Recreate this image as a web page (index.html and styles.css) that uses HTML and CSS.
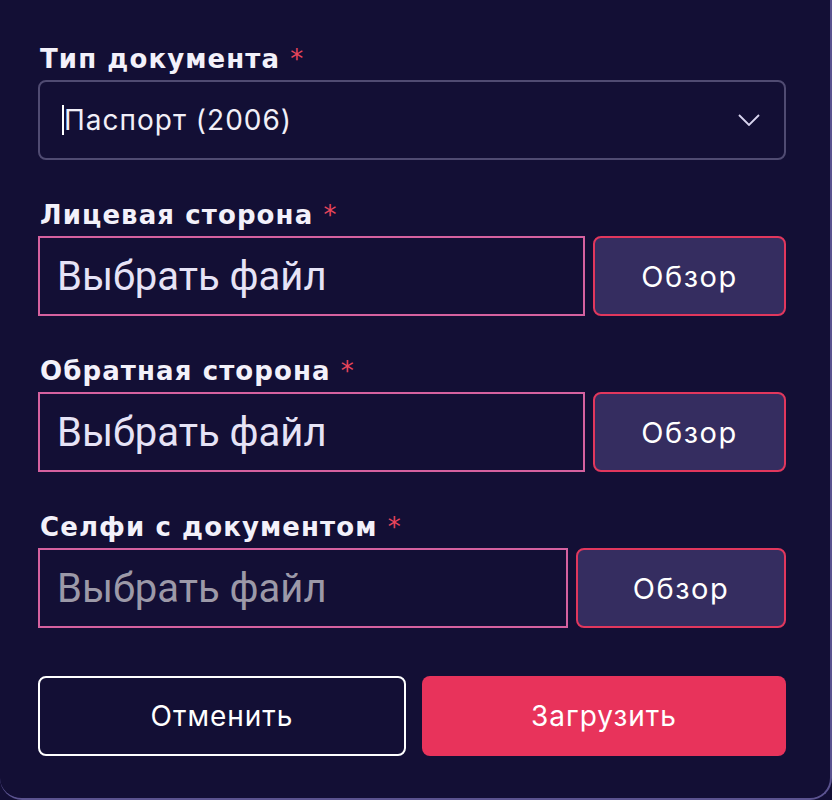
FILE: index.html
```html
<!DOCTYPE html>
<html lang="ru">
<head>
  <meta charset="UTF-8" />
  <meta name="viewport" content="width=device-width, initial-scale=1" />
  <title>Верификация документа</title>
  <link rel="stylesheet" href="styles.css">
</head>
<body>
  <div class="panel">
    <form class="doc-form">

      <div class="group">
        <label class="label">Тип документа <span class="req">*</span></label>
        <div class="select">
          <span class="caret"></span>
          <span class="select-value">Паспорт (2006)</span>
          <svg class="chevron" width="22" height="12" viewBox="0 0 22 12">
            <path d="M1 1 L11 11 L21 1" fill="none" stroke="#d9d5ef" stroke-width="1.8" />
          </svg>
        </div>
      </div>

      <div class="group">
        <label class="label">Лицевая сторона <span class="req">*</span></label>
        <div class="file-row">
          <div class="file-input">Выбрать файл</div>
          <button type="button" class="browse-btn">Обзор</button>
        </div>
      </div>

      <div class="group">
        <label class="label">Обратная сторона <span class="req">*</span></label>
        <div class="file-row">
          <div class="file-input">Выбрать файл</div>
          <button type="button" class="browse-btn">Обзор</button>
        </div>
      </div>

      <div class="group">
        <label class="label">Селфи с документом <span class="req">*</span></label>
        <div class="file-row">
          <div class="file-input empty">Выбрать файл</div>
          <button type="button" class="browse-btn wide">Обзор</button>
        </div>
      </div>

      <div class="actions">
        <button type="button" class="btn btn-cancel">Отменить</button>
        <button type="button" class="btn btn-submit">Загрузить</button>
      </div>

    </form>
  </div>
</body>
</html>
```

FILE: styles.css
```css
* {
  box-sizing: border-box;
}

body {
  margin: 0;
  background: #130f35;
  font-family: 'Inter', 'Noto Sans', sans-serif;
  color: #fff;
}

.panel {
  width: 832px;
  height: 800px;
  background: #130f35;
  border-right: 2px solid #5b5390;
  border-bottom: 2px solid #5b5390;
  border-radius: 0 0 22px 22px;
  padding: 44px 44px 0 38px;
}

.group {
  margin-bottom: 40px;
}

.label {
  display: block;
  height: 30px;
  font-family: 'DejaVu Sans', sans-serif;
  font-size: 26px;
  line-height: 30px;
  font-weight: 700;
  letter-spacing: 1.1px;
  color: #f3f1fa;
  margin: 0 0 6px 2px;
}

.req {
  color: #e8455b;
  font-weight: 400;
  letter-spacing: 0;
}

/* select */
.select {
  height: 80px;
  border: 2px solid #504b72;
  border-radius: 8px;
  display: flex;
  align-items: center;
  padding: 0 22px 0 22px;
}

.caret {
  width: 2px;
  height: 30px;
  background: #fff;
}

.select-value {
  flex: 1;
  font-size: 28px;
  letter-spacing: 1px;
  color: #f1eff8;
}

.chevron {
  margin-right: 2px;
}

/* file rows */
.file-row {
  display: flex;
  gap: 8px;
  height: 80px;
}

.file-input {
  flex: 1;
  border: 2px solid #d5619f;
  display: flex;
  align-items: center;
  padding-left: 17px;
  font-family: 'Roboto', sans-serif;
  font-size: 40px;
  color: #e6e3f6;
}

.file-input.empty {
  color: #9c99a8;
}

.browse-btn {
  width: 193px;
  background: #352d60;
  border: 2px solid #e1375d;
  border-radius: 8px;
  color: #fff;
  font-family: inherit;
  font-size: 29px;
  letter-spacing: 1.5px;
  cursor: pointer;
}

.browse-btn.wide {
  width: 210px;
}

/* actions */
.actions {
  display: flex;
  gap: 16px;
  margin-top: 48px;
}

.btn {
  flex: 1 1 0;
  min-width: 0;
  height: 80px;
  border-radius: 8px;
  font-family: inherit;
  font-size: 28px;
  letter-spacing: 1px;
  color: #fff;
  cursor: pointer;
}

.btn-cancel {
  background: transparent;
  border: 2px solid #fff;
}

.btn-submit {
  background: #e8335b;
  border: none;
}
```
